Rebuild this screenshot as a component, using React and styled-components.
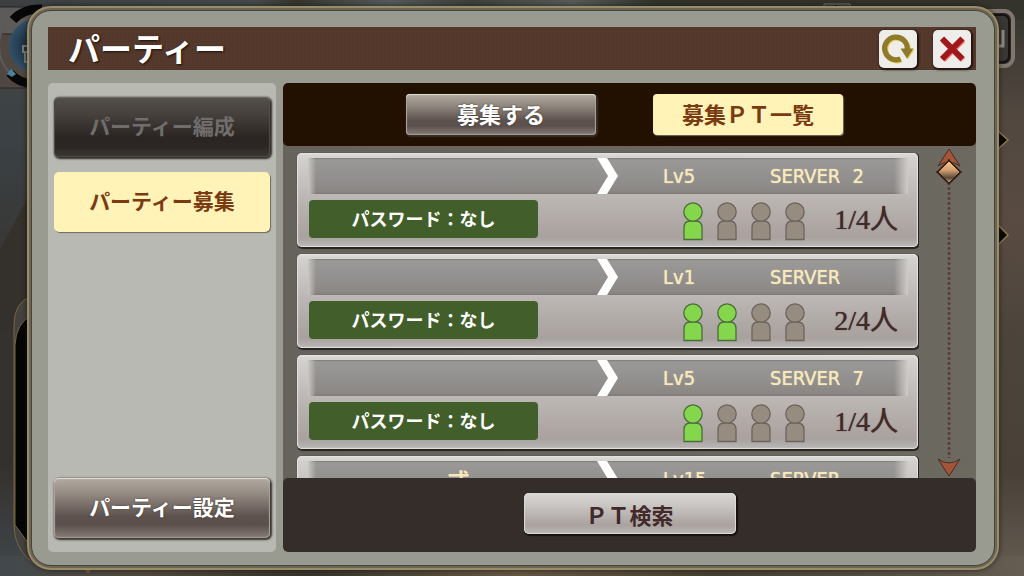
import React, { useState } from 'react'
import styled, { createGlobalStyle, css } from 'styled-components'

const GlobalStyle = createGlobalStyle`
    * {
        box-sizing: border-box;
    }
    body {
        margin: 0;
        background: #3b3935;
        font-family: "Noto Sans CJK JP", sans-serif;
    }
    button {
        font-family: inherit;
        padding: 0;
        border: 0;
        cursor: pointer;
    }
`

const Page = styled.div`
    position: relative;
    display: flex;
    height: 100vh;
    padding: 10px 29px 10px 31px;
    overflow: hidden;
`

const Scene = styled.svg`
    position: absolute;
    inset: 0;
    width: 100%;
    height: 100%;
`

const Frame = styled.main`
    position: relative;
    flex: 1;
    min-width: 0;
    display: flex;
    flex-direction: column;
    gap: 13px;
    padding: 16px 18px 13px 16px;
    background: #9a9b90;
    border: 1px solid #45433a;
    border-radius: 20px;
    box-shadow: 0 0 0 2px #6b6554, 0 0 0 4px #9a8c68, 0 0 4px 5px rgba(20, 18, 14, 0.5);
`

const Header = styled.header`
    display: flex;
    align-items: center;
    height: 43px;
    flex: none;
    padding: 0 5px 0 20px;
    background-color: #57382a;
    background-image:
        repeating-linear-gradient(90deg, rgba(62, 56, 50, 0.3) 0 1px, transparent 1px 4px),
        repeating-linear-gradient(0deg, rgba(62, 56, 50, 0.3) 0 1px, transparent 1px 4px);
`

const Title = styled.h1`
    flex: 1;
    margin: 0;
    padding-bottom: 4px;
    font-size: 32px;
    line-height: 40px;
    font-weight: 700;
    color: #fff;
    text-shadow: 1px 1px 2px #1c100a;
`

const IconButton = styled.button`
    width: 38px;
    height: 38px;
    margin-left: 16px;
    background: #efedea;
    border-radius: 5px;
    box-shadow: 1px 1px 2px 1px #1f140e;

    svg {
        display: block;
    }
`

const Body = styled.div`
    flex: 1;
    min-height: 0;
    display: flex;
    gap: 7px;
`

const Sidebar = styled.nav`
    width: 228px;
    flex: none;
    display: flex;
    flex-direction: column;
    gap: 15px;
    padding: 14px 6px;
    background: #b8b9b3;
    border-radius: 5px;
`

const tones = {
    bronze: css`
        color: #fff;
        background: linear-gradient(#b3aba1 0%, #91887f 28%, #5e524e 64%, #5c504c 78%, #877d76 100%);
        box-shadow: inset 0 1px 1px #e4e0da, inset 0 0 1px 1px #a69e95, 1px 1px 2px 1px #37322d;
        text-shadow: 0 0 2px #3c322e;
    `,
    cream: css`
        color: #7b3b12;
        background: #fff3b8;
        box-shadow: 1px 1px 1px #6f6c5c;
    `,
    dark: css`
        color: #706e6c;
        background: linear-gradient(#54504a 0%, #45403c 30%, #2a2422 68%, #2b2523 82%, #3c3733 100%);
        box-shadow: inset 0 1px 1px #716d67, inset 0 0 1px 1px #4d4944, 1px 1px 2px 1px #302c28;
    `,
    silver: css`
        color: #42292a;
        background: linear-gradient(#dad9d7 0%, #c6c2c0 35%, #a9a29f 78%, #bcb8b6 100%);
        box-shadow: inset 0 0 1px 1px #dddcda, 1px 1px 1px 1px #151210;
    `,
}

const SideButton = styled.button`
    height: 60px;
    width: 100%;
    padding-bottom: 4px;
    border-radius: 5px;
    font-size: 21px;
    line-height: 24px;
    font-weight: 700;
    ${({ $tone }) => tones[$tone]}
`

const Spacer = styled.div`
    flex: 1;
`

const Content = styled.section`
    flex: 1;
    min-width: 0;
    display: flex;
    flex-direction: column;
    background: linear-gradient(90deg, #66635c, #6c6961);
    border-radius: 5px;
    overflow: hidden;
`

const TabBar = styled.div`
    display: flex;
    align-items: center;
    justify-content: center;
    gap: 57px;
    height: 63px;
    flex: none;
    padding-right: 10px;
    background: #221000;
    border-radius: 5px;
`

const TabButton = styled.button`
    width: 190px;
    height: 41px;
    padding-bottom: 4px;
    border-radius: 4px;
    font-size: 22px;
    line-height: 24px;
    font-weight: 700;
    ${({ $tone }) => tones[$tone]}
`

const ListArea = styled.div`
    flex: 1;
    min-height: 0;
    display: flex;
    overflow: hidden;
`

const PartyList = styled.ul`
    flex: 1;
    min-width: 0;
    display: flex;
    flex-direction: column;
    gap: 7px;
    margin: 0;
    padding: 7px 0 0 14px;
    list-style: none;
    overflow: hidden;
`

const Card = styled.li`
    flex: none;
    height: 94px;
    margin-right: 1px;
    padding: 5px 10px 0 11px;
    border-radius: 5px;
    background: linear-gradient(#dcdbd8 0, #d2d0cd 6px, #bdb8b5 42px, #a8a19e 84px, #b9b9b8 94px);
    box-shadow: inset 0 0 1px 1px #e4e3e1, 1px 1px 1px 1px #262320;
`

const CardTop = styled.div`
    display: grid;
    grid-template-columns: minmax(0, 1fr) 22px 44px 107px 138px;
    align-items: center;
    height: 36px;
    background:
        linear-gradient(90deg, #c9c6c3, transparent 8px),
        linear-gradient(270deg, #cfccc9, transparent 14px),
        linear-gradient(#7f7d7b 0, #9a9998 2px, #92908e 20px, #8b8785 33px, #7e7a78 36px);
`

const PartyName = styled.span`
    padding-left: 12px;
    text-align: center;
    font-size: 22px;
    line-height: 24px;
    font-weight: 700;
    color: #f8e9bb;
`

const Stat = styled.span`
    display: flex;
    gap: 12px;
    font-family: "DejaVu Sans Condensed", "DejaVu Sans", sans-serif;
    font-size: 20px;
    line-height: 24px;
    color: #f8e9bb;
    text-shadow: 0 0 1px #f8e9bb;
    white-space: nowrap;
`

const CardBottom = styled.div`
    display: flex;
    align-items: flex-start;
    padding: 6px 10px 0 1px;
`

const Password = styled.span`
    width: 229px;
    height: 38px;
    border-radius: 4px;
    background: #425f2b;
    color: #fff;
    text-align: center;
    font-size: 18px;
    line-height: 36px;
    font-weight: 700;
`

const Members = styled.span`
    flex: 1;
    display: flex;
    justify-content: flex-end;
    gap: 12px;
    padding: 2px 28px 0 0;
`

const Count = styled.span`
    width: 64px;
    text-align: right;
    font-family: "Liberation Serif", "Noto Sans CJK JP", serif;
    font-size: 28px;
    line-height: 40px;
    color: #42292a;
    white-space: nowrap;
    text-shadow: 0 0 1px #42292a;
`

const ScrollRail = styled.div`
    width: 57px;
    flex: none;
    display: flex;
    flex-direction: column;
    align-items: center;
    padding: 2px 0 1px 3px;
`

const ArrowButton = styled.button`
    height: 19px;
    background: none;

    svg {
        display: block;
    }
`

const ScrollSlider = styled.input`
    flex: 1;
    min-height: 0;
    width: 26px;
    margin: -8px 0 0;
    appearance: none;
    writing-mode: vertical-lr;
    background: radial-gradient(circle, #5b3a38 0 1px, transparent 2px) center / 4px 5px repeat-y;
    cursor: pointer;

    &::-webkit-slider-thumb {
        appearance: none;
        width: 26px;
        height: 26px;
        clip-path: polygon(50% 0, 100% 50%, 50% 100%, 0 50%);
        background:
            linear-gradient(45deg, #33221a 29%, transparent 30% 70%, #33221a 71%),
            linear-gradient(135deg, #33221a 29%, transparent 30% 70%, #33221a 71%),
            linear-gradient(#f4bd87 4px, #d3a06f 11px, #5c4739 19px, #b99b78 23px);
    }
`

const Footer = styled.footer`
    display: flex;
    align-items: center;
    justify-content: center;
    height: 74px;
    flex: none;
    padding-bottom: 3px;
    background: #342d2a;
    border-radius: 5px;
`

const SearchButton = styled.button`
    width: 212px;
    height: 41px;
    border-radius: 5px;
    font-size: 22px;
    line-height: 24px;
    font-weight: 700;
    ${({ $tone }) => tones[$tone]}
`

const parties = [
    { id: 1, name: '', level: 5, server: 2, members: 1 },
    { id: 2, name: '', level: 1, server: null, members: 2 },
    { id: 3, name: '', level: 5, server: 7, members: 1 },
    { id: 4, name: '式', level: 15, server: null, members: 1 },
]

const Member = ({ active }) => (
    <svg width="22" height="40" viewBox="0 0 22 40" aria-hidden="true">
        <g fill={active ? '#84d64d' : '#978c80'} stroke={active ? '#4d6b3c' : '#6c645d'} strokeWidth="1.3">
            <path d="M2 37.5V26Q2 19 8 19H14Q20 19 20 26V37.5Z" />
            <circle cx="11" cy="10" r="9.2" />
        </g>
    </svg>
)

const Chevron = () => (
    <svg width="22" height="36" viewBox="0 0 22 36" aria-hidden="true">
        <path d="M0 0H10L21 18L10 36H0L11 18Z" fill="#fff" />
    </svg>
)

const RefreshIcon = () => (
    <svg width="38" height="38" viewBox="0 0 38 38" aria-hidden="true">
        <path d="M21.5 28.8A11.3 11.3 0 1 1 28.2 19.5" fill="none" stroke="#e3d05a" strokeWidth="5.2" transform="translate(1 1)" />
        <path d="M22.5 19.5H35.5L29 29.5Z" fill="#e3d05a" />
        <path d="M21.5 28.8A11.3 11.3 0 1 1 28.2 19.5" fill="none" stroke="#8f792b" strokeWidth="5.2" />
        <path d="M21.5 18.5H34.5L28 28.5Z" fill="#8f792b" />
    </svg>
)

const CloseIcon = () => (
    <svg width="38" height="38" viewBox="0 0 38 38" aria-hidden="true">
        <path d="M10 10L30 30M30 10L10 30" stroke="#f07f7c" strokeWidth="6" />
        <path d="M9 8.5L29.5 29M29.5 8.5L9 29" stroke="#9f191c" strokeWidth="6" />
    </svg>
)

const Arrow = ({ down }) => (
    <svg width="24" height="19" viewBox="0 0 24 19" aria-hidden="true">
        <path
            d={down ? 'M1 1Q12 9 23 1L12 18Z' : 'M1 18Q12 10 23 18L12 1Z'}
            fill="#a55537"
            stroke="#4b2a20"
            strokeWidth="1"
        />
    </svg>
)

const Backdrop = () => (
    <Scene viewBox="0 0 1024 576" preserveAspectRatio="none" aria-hidden="true">
        <defs>
            <linearGradient id="leftWall" x2="0" y2="1">
                <stop offset="0" stopColor="#454746" />
                <stop offset="0.25" stopColor="#3b4144" />
                <stop offset="0.5" stopColor="#36332f" />
                <stop offset="0.8" stopColor="#34302c" />
                <stop offset="1" stopColor="#41484c" />
            </linearGradient>
            <linearGradient id="rightWall" x2="0" y2="1">
                <stop offset="0" stopColor="#34342d" />
                <stop offset="0.2" stopColor="#51473f" />
                <stop offset="0.38" stopColor="#594b41" />
                <stop offset="0.6" stopColor="#4b443b" />
                <stop offset="0.82" stopColor="#494137" />
                <stop offset="1" stopColor="#655c52" />
            </linearGradient>
            <linearGradient id="sky">
                <stop offset="0" stopColor="#3a3f42" />
                <stop offset="0.25" stopColor="#45494a" />
                <stop offset="0.29" stopColor="#34362e" />
                <stop offset="0.38" stopColor="#555a5b" />
                <stop offset="0.46" stopColor="#3d403b" />
                <stop offset="0.56" stopColor="#575b59" />
                <stop offset="0.64" stopColor="#30332a" />
                <stop offset="1" stopColor="#34342d" />
            </linearGradient>
            <linearGradient id="floor">
                <stop offset="0" stopColor="#42494c" />
                <stop offset="0.14" stopColor="#51483b" />
                <stop offset="0.3" stopColor="#35332b" />
                <stop offset="0.5" stopColor="#655744" />
                <stop offset="0.7" stopColor="#453f31" />
                <stop offset="1" stopColor="#655c52" />
            </linearGradient>
            <radialGradient id="orb">
                <stop offset="0" stopColor="#101b24" />
                <stop offset="1" stopColor="#31506a" />
            </radialGradient>
        </defs>
        <path fill="url(#leftWall)" d="M0 0H60V576H0Z" />
        <path fill="url(#rightWall)" d="M960 0H1024V576H960Z" />
        <path fill="url(#sky)" d="M0 0H1024V20H0Z" />
        <path fill="url(#floor)" d="M0 556H1024V576H0Z" />
        <path fill="#5d5b59" d="M0 7H60V34H0Z" />
        <path fill="#4f4742" d="M0 34H40V88H0Z" />
        <path d="M0 7H40M0 34H12M0 88H40" stroke="#28231f" />
        <circle cx="38" cy="46" r="39" fill="none" stroke="#5c5a58" strokeWidth="2" />
        <path d="M13 20Q24 8 42 9" fill="none" stroke="#070707" strokeWidth="9" />
        <path d="M10 73Q18 83 34 84" fill="none" stroke="#070707" strokeWidth="9" />
        <circle cx="36" cy="46" r="27" fill="url(#orb)" />
        <path d="M7 74L11 69L16 74L12 77Z" fill="#48819b" />
        <path d="M31 46H23V52H31M25 52V62H31" fill="none" stroke="#77797b" strokeWidth="2" />
        <path d="M32 190L0 250V330H32Z" fill="#34302b" />
        <path d="M32 296Q14 302 14 325V525Q15 558 45 568H60V300Z" fill="#45423e" stroke="#766548" />
        <path d="M32 315Q16 323 15 345V525L32 548Z" fill="#050505" stroke="#766548" />
        <path d="M84 568L88 573L92 568Z" fill="#a95d3d" />
        <path d="M824 10V4H850V10" fill="#3c3c37" stroke="#77766f" />
        <path d="M832 8H841M836 5V9" stroke="#111" strokeWidth="2" />
        <rect x="974" y="11" width="39" height="55" rx="9" fill="#292724" stroke="#80766e" strokeWidth="4" />
        <rect x="976" y="15" width="33" height="47" rx="6" fill="#393734" stroke="#151412" strokeWidth="2" />
        <path d="M1003 30V46H994" fill="none" stroke="#8b8986" strokeWidth="3" />
        <path d="M998 131L1008 140L998 149ZM998 225L1008 235L998 245Z" fill="#0b0a08" stroke="#8a7950" strokeWidth="1.5" />
    </Scene>
)

export default function App() {
    const [scroll, setScroll] = useState(0)

    return (
        <Page>
            <GlobalStyle />
            <Backdrop />
            <Frame>
                <Header>
                    <Title>パーティー</Title>
                    <IconButton aria-label="更新"><RefreshIcon /></IconButton>
                    <IconButton aria-label="閉じる"><CloseIcon /></IconButton>
                </Header>
                <Body>
                    <Sidebar>
                        <SideButton $tone="dark" disabled>パーティー編成</SideButton>
                        <SideButton $tone="cream">パーティー募集</SideButton>
                        <Spacer />
                        <SideButton $tone="bronze">パーティー設定</SideButton>
                    </Sidebar>
                    <Content>
                        <TabBar>
                            <TabButton $tone="bronze">募集する</TabButton>
                            <TabButton $tone="cream">募集ＰＴ一覧</TabButton>
                        </TabBar>
                        <ListArea>
                            <PartyList>
                                {parties.map(party => (
                                    <Card key={party.id}>
                                        <CardTop>
                                            <PartyName>{party.name}</PartyName>
                                            <Chevron />
                                            <span />
                                            <Stat>Lv{party.level}</Stat>
                                            <Stat>
                                                <span>SERVER</span>
                                                {party.server && <span>{party.server}</span>}
                                            </Stat>
                                        </CardTop>
                                        <CardBottom>
                                            <Password>パスワード：なし</Password>
                                            <Members>
                                                {[0, 1, 2, 3].map(n => (
                                                    <Member key={n} active={n < party.members} />
                                                ))}
                                            </Members>
                                            <Count>{party.members}/4人</Count>
                                        </CardBottom>
                                    </Card>
                                ))}
                            </PartyList>
                            <ScrollRail>
                                <ArrowButton aria-label="上へ"><Arrow /></ArrowButton>
                                <ScrollSlider
                                    type="range"
                                    aria-label="スクロール"
                                    value={scroll}
                                    onChange={e => setScroll(Number(e.target.value))}
                                />
                                <ArrowButton aria-label="下へ"><Arrow down /></ArrowButton>
                            </ScrollRail>
                        </ListArea>
                        <Footer>
                            <SearchButton $tone="silver">ＰＴ検索</SearchButton>
                        </Footer>
                    </Content>
                </Body>
            </Frame>
        </Page>
    )
}
